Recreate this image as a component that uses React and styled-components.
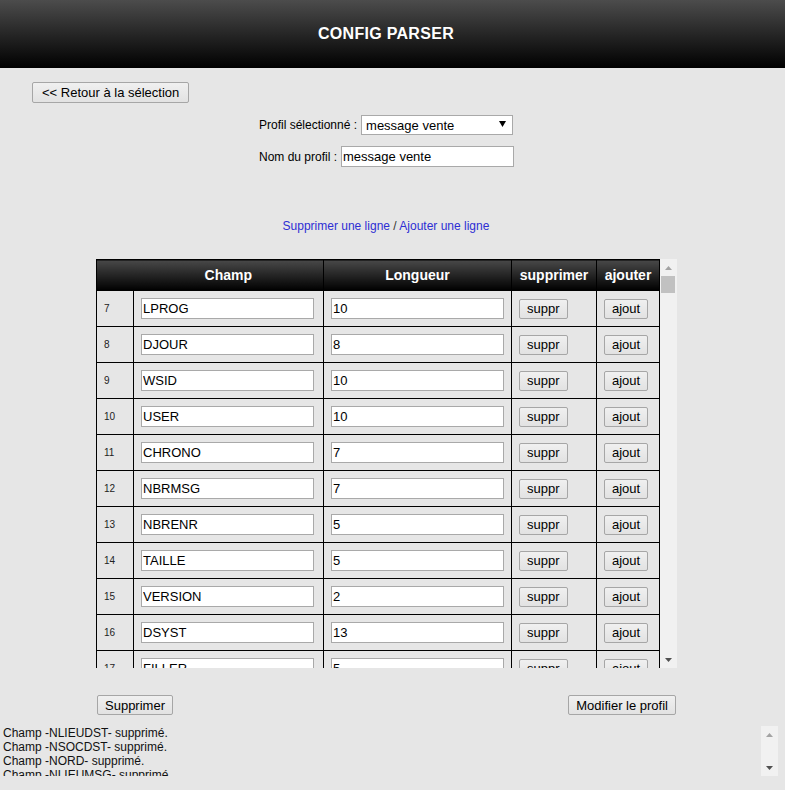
import React from 'react';
import styled, { createGlobalStyle, css } from 'styled-components';

const Global = createGlobalStyle`
  html, body { margin: 0; padding: 0; background: #e6e6e6; }
  body { font-family: "Liberation Sans", Arial, sans-serif; font-size: 12px; color: #000; }
  * { box-sizing: border-box; }
`;

const Header = styled.header`
  height: 68px;
  background: linear-gradient(to bottom, #4c4c4c 0%, #000 100%);
  display: flex;
`;

const Title = styled.h1`
  margin: 0;
  width: 772px;
  display: flex;
  align-items: center;
  justify-content: center;
  color: #fff;
  font-weight: bold;
  font-size: 16px;
  letter-spacing: 0.3px;
`;

const Main = styled.main`
  width: 772px;
  display: flex;
  flex-direction: column;
`;

const Button = styled.button`
  font-family: "Liberation Sans", Arial, sans-serif;
  font-size: 13px;
  color: #000;
  height: ${p => p.$h || 20}px;
  padding: 0 ${p => p.$px || 7}px;
  background: linear-gradient(to bottom, #f0f0f0, #e2e2e2);
  border: 1px solid #a6a6a6;
  border-radius: 2px;
  line-height: 1;
  cursor: pointer;
`;

const BackRow = styled.div`
  margin-top: 14px;
  padding-left: 32px;
  display: flex;
`;

const FormBlock = styled.div`
  align-self: center;
  width: 254px;
  display: flex;
  flex-direction: column;
  margin-top: 12px;
`;

const FormRow = styled.div`
  display: flex;
  align-items: center;
  gap: 4px;
  margin-top: ${p => p.$mt || 0}px;
`;

const Label = styled.label`
  font-size: 12px;
  white-space: nowrap;
`;

const SelectBox = styled.div`
  position: relative;
  flex: 1;
  height: 20px;
`;

const Select = styled.select`
  appearance: none;
  width: 100%;
  height: 20px;
  border: 1px solid #a9a9a9;
  background: #fff;
  font-family: "Liberation Sans", Arial, sans-serif;
  font-size: 13px;
  padding: 0 0 0 4px;
  color: #000;
`;

const Caret = styled.svg`
  position: absolute;
  right: 7px;
  top: 6px;
  pointer-events: none;
`;

const TextInput = styled.input`
  width: ${p => p.$w || 173}px;
  height: 21px;
  border: 1px solid #a9a9a9;
  background: #fff;
  font-family: "Liberation Sans", Arial, sans-serif;
  font-size: 13px;
  padding: 0 1px;
  color: #000;
`;

const LinkLine = styled.div`
  margin-top: 52px;
  text-align: center;
  font-size: 12px;
  line-height: 14px;
  color: #333;
`;

const Link = styled.a`
  color: #2e2ed4;
  text-decoration: none;
`;

const TableFrame = styled.div`
  margin: 26px 0 0 96px;
  width: 581px;
  height: 409px;
  display: flex;
`;

const Viewport = styled.div`
  width: 564px;
  height: 100%;
  overflow: hidden;
`;

const ScrollBar = styled.div`
  width: 17px;
  height: 100%;
  flex-shrink: 0;
  background: #f1f1f1;
  display: flex;
  flex-direction: column;
`;

const ArrowBtn = styled.div`
  height: 17px;
  flex-shrink: 0;
  display: flex;
  align-items: center;
  justify-content: center;
`;

const Track = styled.div`
  flex: 1;
  display: flex;
  flex-direction: column;
`;

const Thumb = styled.div`
  height: 17px;
  margin: 0 2px 0 1px;
  background: #c1c1c1;
`;

const Table = styled.table`
  border-collapse: collapse;
  table-layout: fixed;
  width: 564px;
`;

const HeadRow = styled.tr`
  height: 31px;
`;

const Th = styled.th`
  background: linear-gradient(to bottom, #484848 0%, #000 100%);
  color: #fff;
  font-size: 14px;
  font-weight: bold;
  text-align: center;
  padding: 0;
  border: 1px solid #000;
  ${p => p.$blank && css`border-right: hidden;`}
`;

const BodyRow = styled.tr`
  height: 36px;
`;

const Td = styled.td`
  border: 1px solid #000;
  padding: 0 0 0 7px;
  vertical-align: middle;
`;

const NumCell = styled(Td)`
  font-size: 10px;
  color: #222;
`;

const Bottom = styled.div`
  margin: 27px 0 0 97px;
  width: 579px;
  display: flex;
  justify-content: space-between;
`;

const LogFrame = styled.div`
  margin-top: 11px;
  width: 778px;
  height: 50px;
  display: flex;
`;

const LogText = styled.div`
  flex: 1;
  overflow: hidden;
  padding: 0 3px;
  font-size: 12px;
  line-height: 14px;
  color: #111;
`;

function Arrow({ dir, color }) {
  return (
    <ArrowBtn>
      <svg width="7" height="4" viewBox="0 0 7 4">
        <polygon points={dir === 'up' ? '0,4 7,4 3.5,0' : '0,0 7,0 3.5,4'} fill={color} />
      </svg>
    </ArrowBtn>
  );
}

function VScroll({ thumb }) {
  return (
    <ScrollBar>
      <Arrow dir="up" color="#a3a3a3" />
      <Track>{thumb && <Thumb />}</Track>
      <Arrow dir="down" color="#505050" />
    </ScrollBar>
  );
}

const rows = [
  ['LPROG', '10'], ['DJOUR', '8'], ['WSID', '10'], ['USER', '10'], ['CHRONO', '7'],
  ['NBRMSG', '7'], ['NBRENR', '5'], ['TAILLE', '5'], ['VERSION', '2'], ['DSYST', '13'],
  ['FILLER', '5'],
].map(([name, len], i) => ({ n: i + 7, name, len }));

const logLines = [
  'Champ -NLIEUDST- supprimé.',
  'Champ -NSOCDST- supprimé.',
  'Champ -NORD- supprimé.',
  'Champ -NLIEUMSG- supprimé.',
];

export default function App() {
  return (
    <>
      <Global />
      <Header>
        <Title>CONFIG PARSER</Title>
      </Header>
      <Main>
        <BackRow>
          <Button $h={21} $px={9}>&lt;&lt; Retour à la sélection</Button>
        </BackRow>
        <FormBlock>
          <FormRow>
            <Label>Profil sélectionné :</Label>
            <SelectBox>
              <Select defaultValue="message vente">
                <option>message vente</option>
                <option>message achat</option>
              </Select>
              <Caret width="7" height="6" viewBox="0 0 7 6">
                <polygon points="0,0 7,0 3.5,6" fill="#000" />
              </Caret>
            </SelectBox>
          </FormRow>
          <FormRow $mt={11}>
            <Label>Nom du profil :</Label>
            <TextInput $w={173} defaultValue="message vente" />
          </FormRow>
        </FormBlock>
        <LinkLine>
          <Link href="#">Supprimer une ligne</Link> / <Link href="#">Ajouter une ligne</Link>
        </LinkLine>
        <TableFrame>
          <Viewport>
            <Table>
              <colgroup>
                <col style={{ width: 37 }} />
                <col style={{ width: 190 }} />
                <col style={{ width: 188 }} />
                <col style={{ width: 85 }} />
                <col style={{ width: 63 }} />
              </colgroup>
              <thead>
                <HeadRow>
                  <Th $blank />
                  <Th>Champ</Th>
                  <Th>Longueur</Th>
                  <Th>supprimer</Th>
                  <Th>ajouter</Th>
                </HeadRow>
              </thead>
              <tbody>
                {rows.map(r => (
                  <BodyRow key={r.n}>
                    <NumCell>{r.n}</NumCell>
                    <Td><TextInput defaultValue={r.name} /></Td>
                    <Td><TextInput defaultValue={r.len} /></Td>
                    <Td><Button>suppr</Button></Td>
                    <Td><Button>ajout</Button></Td>
                  </BodyRow>
                ))}
              </tbody>
            </Table>
          </Viewport>
          <VScroll thumb />
        </TableFrame>
        <Bottom>
          <Button>Supprimer</Button>
          <Button>Modifier le profil</Button>
        </Bottom>
      </Main>
      <LogFrame>
        <LogText>
          {logLines.map((l, i) => <div key={i}>{l}</div>)}
        </LogText>
        <VScroll />
      </LogFrame>
    </>
  );
}
